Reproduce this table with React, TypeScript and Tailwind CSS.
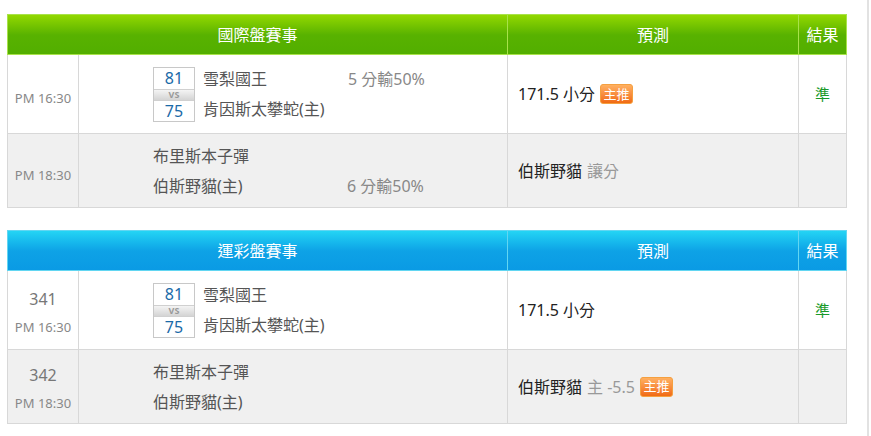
import React from "react";

const font = { fontFamily: '"Noto Sans", "Noto Sans CJK TC", sans-serif' };

function Badge() {
  return (
    <span className="ml-[5px] inline-flex h-[20px] w-[33px] items-center justify-center rounded-[3px] border border-[#f5a040] bg-gradient-to-b from-[#ffb060] to-[#f06a10] text-[13px] leading-none text-white">
      主推
    </span>
  );
}

function ScoreBox({ a, b }: { a: string; b: string }) {
  return (
    <div className="flex w-[42px] flex-col border border-[#c8c8c8] bg-white">
      <div className="flex h-[21px] items-center justify-center text-[16px] leading-none text-[#1a6aa8]">{a}</div>
      <div className="flex h-[12px] items-center justify-center border-y border-[#d0d0d0] bg-gradient-to-b from-[#f4f4f4] to-[#d4d4d4] text-[9px] font-bold leading-none text-[#999]">
        VS
      </div>
      <div className="flex h-[20px] items-center justify-center text-[16px] leading-none text-[#1a6aa8]">{b}</div>
    </div>
  );
}

type Row = {
  num?: string;
  time: string;
  score?: [string, string];
  t1: string;
  t2: string;
  odds?: string;
  oddsLine?: 1 | 2;
  pred: React.ReactNode;
  result?: string;
  alt?: boolean;
};

function TableBlock({ title, blue, rows }: { title: string; blue?: boolean; rows: Row[] }) {
  const head = blue
    ? "bg-gradient-to-b from-[#24d4f4] via-[#0ea2e6] to-[#0a9ae4]"
    : "bg-gradient-to-b from-[#92d800] via-[#58b200] to-[#52ae00]";
  const sep = blue ? "border-[#62d6f2]" : "border-[#a8e24a]";
  return (
    <table className="w-[839px] table-fixed border-collapse">
      <colgroup>
        <col className="w-[71px]" />
        <col className="w-[429px]" />
        <col className="w-[291px]" />
        <col className="w-[48px]" />
      </colgroup>
      <thead>
        <tr className={`h-[40px] ${head}`}>
          <th colSpan={2} className={`border ${sep} text-[16px] font-normal text-white`}>
            {title}
          </th>
          <th className={`border ${sep} text-[16px] font-normal text-white`}>預測</th>
          <th className={`border ${sep} text-[16px] font-normal text-white`}>結果</th>
        </tr>
      </thead>
      <tbody>
        {rows.map((r, i) => (
          <tr key={i} className={`${i === 0 ? "h-[79px]" : "h-[74px]"} ${r.alt ? "bg-[#f0f0f0]" : "bg-white"}`}>
            <td className={`border border-[#d8d8d8] text-center align-middle ${r.num ? "pt-[1px]" : "pt-[8px]"}`}>
              {r.num && <div className="mb-[6px] text-[16px] leading-[26px] text-[#777]">{r.num}</div>}
              <div className="text-[13px] leading-[18px] text-[#888]">{r.time}</div>
            </td>
            <td className="border border-[#d8d8d8] align-middle">
              <div className="flex items-center pl-[74px]">
                {r.score && (
                  <div className="mr-[8px]">
                    <ScoreBox a={r.score[0]} b={r.score[1]} />
                  </div>
                )}
                <div className={`flex flex-col gap-[8px] text-[16px] leading-[22px] text-[#555] ${r.score ? "w-[145px]" : "w-[194px]"}`}>
                  <span className="whitespace-nowrap">{r.t1}</span>
                  <span className="whitespace-nowrap">{r.t2}</span>
                </div>
                <div className="flex flex-col gap-[8px] text-[16px] leading-[22px] text-[#888]">
                  <span>{r.oddsLine === 1 ? r.odds : "\u00a0"}</span>
                  <span>{r.oddsLine === 2 ? r.odds : "\u00a0"}</span>
                </div>
              </div>
            </td>
            <td className="border border-[#d8d8d8] pl-[10px] align-middle text-[16px] text-[#222]">
              <div className="flex items-center">{r.pred}</div>
            </td>
            <td className="border border-[#d8d8d8] text-center align-middle text-[15px] text-[#1a9a2a]">
              {r.result}
            </td>
          </tr>
        ))}
      </tbody>
    </table>
  );
}

export default function App() {
  return (
    <div style={font} className="h-[436px] w-[869px] border-r-2 border-[#e2e2e2] bg-white pl-[7px] pt-[14px]">
      <TableBlock
        title="國際盤賽事"
        rows={[
          {
            time: "PM 16:30",
            score: ["81", "75"],
            t1: "雪梨國王",
            t2: "肯因斯太攀蛇(主)",
            odds: "5 分輸50%",
            oddsLine: 1,
            pred: (
              <>
                <span>171.5 小分</span>
                <Badge />
              </>
            ),
            result: "準",
          },
          {
            time: "PM 18:30",
            t1: "布里斯本子彈",
            t2: "伯斯野貓(主)",
            odds: "6 分輸50%",
            oddsLine: 2,
            alt: true,
            pred: (
              <>
                <span>伯斯野貓</span>
                <span className="ml-[5px] text-[#999]">讓分</span>
              </>
            ),
          },
        ]}
      />
      <div className="h-[22px]" />
      <TableBlock
        title="運彩盤賽事"
        blue
        rows={[
          {
            num: "341",
            time: "PM 16:30",
            score: ["81", "75"],
            t1: "雪梨國王",
            t2: "肯因斯太攀蛇(主)",
            pred: <span>171.5 小分</span>,
            result: "準",
          },
          {
            num: "342",
            time: "PM 18:30",
            t1: "布里斯本子彈",
            t2: "伯斯野貓(主)",
            alt: true,
            pred: (
              <>
                <span>伯斯野貓</span>
                <span className="ml-[5px] text-[#999]">主 -5.5</span>
                <Badge />
              </>
            ),
          },
        ]}
      />
    </div>
  );
}
